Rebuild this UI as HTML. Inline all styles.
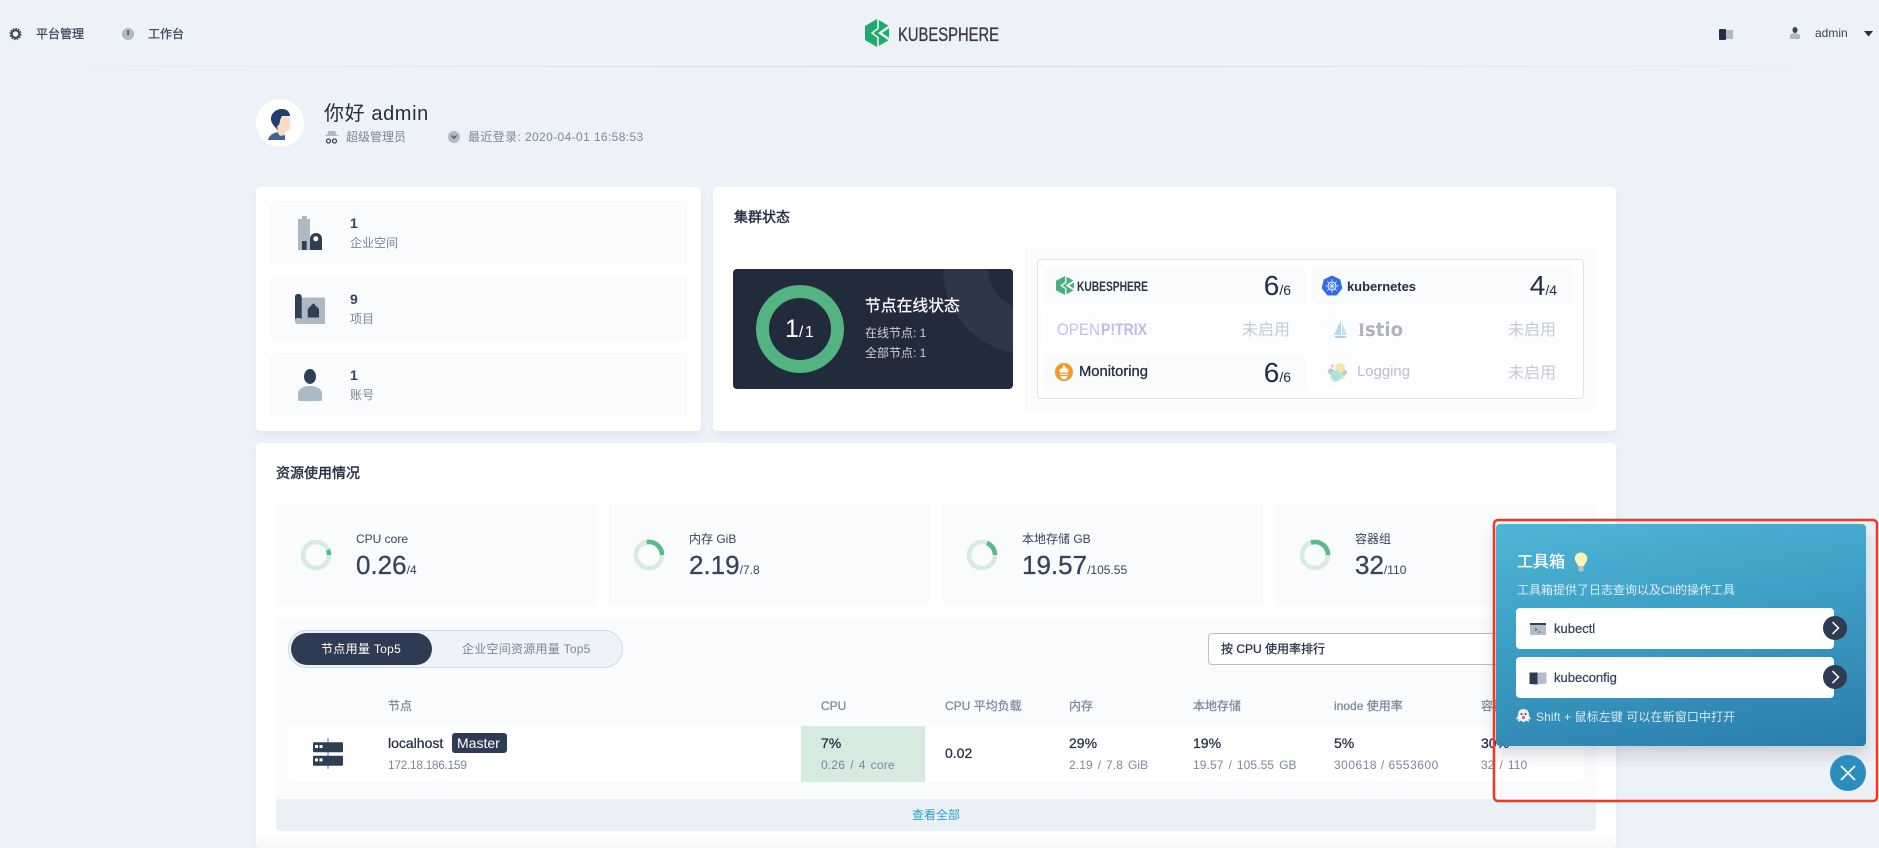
<!DOCTYPE html>
<html lang="zh">
<head>
<meta charset="utf-8">
<title>KubeSphere</title>
<style>
html,body{margin:0;padding:0;width:1879px;height:848px;overflow:hidden;}
body{background:#edf2f9;font-family:"Liberation Sans","Noto Sans CJK SC",sans-serif;color:#242e42;}
#w{position:absolute;left:0;top:0;width:1879px;height:848px;overflow:hidden;}
.b{position:absolute;box-sizing:border-box;}
.t{position:absolute;white-space:nowrap;line-height:20px;font-size:12px;}
.g{color:#79879c;}
.m{color:#36435c;}
.B{font-weight:700;}
.h{-webkit-text-stroke:.25px currentColor;}
.sub{word-spacing:1.5px;letter-spacing:.1px;}
.card{background:#fff;border-radius:4px;box-shadow:0 4px 8px rgba(36,46,66,.06);}
.soft{background:#f9fbfd;border-radius:4px;}
.n{position:absolute;line-height:37px;white-space:nowrap;text-align:right;color:#242e42;font-size:28px;}
.n span{font-size:14px;}
.off{position:absolute;line-height:37px;font-size:16px;color:#c6cad2;white-space:nowrap;text-align:right;}
.val{position:absolute;white-space:nowrap;line-height:30px;font-size:26px;color:#36435c;-webkit-text-stroke:.3px #36435c;}
.val span{font-size:12px;-webkit-text-stroke:0;}
svg{position:absolute;left:0;top:0;}
</style>
</head>
<body>
<div id="w">

<!-- nav -->
<div class="b" style="left:0;top:66px;width:1879px;height:1px;background:linear-gradient(90deg,rgba(209,215,228,0),#d1d7e4 50%,rgba(209,215,228,0));"></div>
<div class="t h" style="left:36px;top:24px;color:#36435c;">平台管理</div>
<div class="t h" style="left:148px;top:24px;color:#36435c;">工作台</div>
<div class="t m" style="left:1815px;top:23px;font-size:12px;">admin</div>

<!-- greeting -->
<div class="b" style="left:256px;top:99px;width:48px;height:48px;border-radius:50%;background:#fff;"></div>
<div class="t" style="left:324px;top:99px;font-size:20px;line-height:30px;color:#242e42;letter-spacing:.6px;">你好 admin</div>
<div class="t g" style="left:346px;top:127px;">超级管理员</div>
<div class="t g" style="left:468px;top:127px;letter-spacing:.38px;">最近登录: 2020-04-01 16:58:53</div>

<!-- left card -->
<div class="b card" style="left:256px;top:187px;width:445px;height:244px;"></div>
<div class="b soft" style="left:270px;top:201px;width:417px;height:64px;"></div>
<div class="b soft" style="left:270px;top:277px;width:417px;height:64px;"></div>
<div class="b soft" style="left:270px;top:353px;width:417px;height:64px;"></div>
<div class="t B" style="left:350px;top:213px;font-size:14px;color:#36435c;">1</div>
<div class="t g" style="left:350px;top:233px;">企业空间</div>
<div class="t B" style="left:350px;top:289px;font-size:14px;color:#36435c;">9</div>
<div class="t g" style="left:350px;top:309px;">项目</div>
<div class="t B" style="left:350px;top:365px;font-size:14px;color:#36435c;">1</div>
<div class="t g" style="left:350px;top:385px;">账号</div>

<!-- cluster card -->
<div class="b card" style="left:713px;top:187px;width:903px;height:244px;"></div>
<div class="t h" style="left:734px;top:207px;font-size:14px;-webkit-text-stroke:.4px #242e42;">集群状态</div>
<div class="b" style="left:733px;top:269px;width:280px;height:120px;background:#212b3c;border-radius:4px;overflow:hidden;">
  <div class="b" style="left:210px;top:-85px;width:170px;height:170px;border-radius:50%;background:#2d3748;"></div>
  <div class="b" style="left:255px;top:-40px;width:80px;height:80px;border-radius:50%;background:#212b3c;"></div>
  <div class="b" style="left:23px;top:16px;width:88px;height:88px;border-radius:50%;border:13px solid #53b481;"></div>
</div>
<div class="t" style="left:785px;top:314px;line-height:30px;font-size:25px;color:#fff;">1<span style="font-size:16px;letter-spacing:1.5px;">/1</span></div>
<div class="t h" style="left:865px;top:297px;font-size:15.8px;color:#fff;">节点在线状态</div>
<div class="t" style="left:865px;top:323px;color:rgba(255,255,255,.78);">在线节点: 1</div>
<div class="t" style="left:865px;top:343px;color:rgba(255,255,255,.78);">全部节点: 1</div>

<div class="b soft" style="left:1025px;top:247px;width:571px;height:164px;"></div>
<div class="b" style="left:1037px;top:259px;width:547px;height:140px;background:#fff;border:1px solid #dde3ec;border-radius:4px;"></div>
<div class="b soft" style="left:1045px;top:267px;width:261px;height:37px;"></div>
<div class="b soft" style="left:1312px;top:267px;width:260px;height:37px;"></div>
<div class="b" style="left:1045px;top:310px;width:261px;height:37px;background:#fcfdfe;border-radius:4px;"></div>
<div class="b" style="left:1312px;top:310px;width:260px;height:37px;background:#fcfdfe;border-radius:4px;"></div>
<div class="b soft" style="left:1045px;top:354px;width:261px;height:37px;"></div>
<div class="b" style="left:1312px;top:354px;width:260px;height:37px;background:#fcfdfe;border-radius:4px;"></div>

<div class="n" style="left:1191px;width:100px;top:267px;">6<span>/6</span></div>
<div class="n" style="left:1457px;width:100px;top:267px;">4<span>/4</span></div>
<div class="n" style="left:1191px;width:100px;top:354px;">6<span>/6</span></div>
<div class="off" style="left:1191px;width:99px;top:312px;">未启用</div>
<div class="off" style="left:1457px;width:99px;top:312px;">未启用</div>
<div class="off" style="left:1457px;width:99px;top:355px;">未启用</div>

<!-- resources -->
<div class="b card" style="left:256px;top:443px;width:1360px;height:405px;"></div>
<div class="t h" style="left:276px;top:463px;font-size:14px;-webkit-text-stroke:.4px #242e42;">资源使用情况</div>
<div class="b soft" style="left:276px;top:503px;width:321px;height:103px;"></div>
<div class="b soft" style="left:609px;top:503px;width:321px;height:103px;"></div>
<div class="b soft" style="left:942px;top:503px;width:321px;height:103px;"></div>
<div class="b soft" style="left:1275px;top:503px;width:321px;height:103px;"></div>

<div class="t m" style="left:356px;top:529px;">CPU core</div>
<div class="val" style="left:356px;top:550px;">0.26<span>/4</span></div>
<div class="t m" style="left:689px;top:529px;">内存 GiB</div>
<div class="val" style="left:689px;top:550px;">2.19<span>/7.8</span></div>
<div class="t m" style="left:1022px;top:529px;">本地存储 GB</div>
<div class="val" style="left:1022px;top:550px;">19.57<span>/105.55</span></div>
<div class="t m" style="left:1355px;top:529px;">容器组</div>
<div class="val" style="left:1355px;top:550px;">32<span>/110</span></div>

<div class="b" style="left:276px;top:618px;width:1320px;height:190px;background:#f9fbfd;"></div>
<div class="b" style="left:276px;top:799px;width:1320px;height:32px;background:#ebf0f7;border-radius:0 0 4px 4px;"></div>
<div class="t" style="left:912px;top:805px;color:#329dce;">查看全部</div>

<div class="b" style="left:288px;top:630px;width:335px;height:38px;border-radius:19px;border:1px solid #d1d7e4;background:#eef3f9;"></div>
<div class="b" style="left:291px;top:633px;width:141px;height:32px;border-radius:16px;background:#2f3b53;"></div>
<div class="t" style="left:321px;top:639px;color:#fff;letter-spacing:.3px;">节点用量 Top5</div>
<div class="t g" style="left:462px;top:639px;letter-spacing:.25px;">企业空间资源用量 Top5</div>

<div class="b" style="left:1208px;top:633px;width:376px;height:32px;background:#fff;border:1px solid #b6c0cd;border-radius:4px;"></div>
<div class="t h" style="left:1221px;top:639px;">按 CPU 使用率排行</div>

<div class="t g h" style="left:388px;top:696px;">节点</div>
<div class="t g h" style="left:821px;top:696px;">CPU</div>
<div class="t g h" style="left:945px;top:696px;">CPU 平均负载</div>
<div class="t g h" style="left:1069px;top:696px;">内存</div>
<div class="t g h" style="left:1193px;top:696px;">本地存储</div>
<div class="t g h" style="left:1334px;top:696px;">inode 使用率</div>
<div class="t g h" style="left:1481px;top:696px;">容器组</div>

<div class="b" style="left:288px;top:726px;width:1296px;height:56px;background:#fff;border-radius:4px;"></div>
<div class="b" style="left:801px;top:726px;width:124px;height:56px;background:#d6eadf;"></div>
<div class="t h" style="left:388px;top:733px;font-size:14px;">localhost</div>
<div class="b" style="left:452px;top:733px;width:55px;height:20px;background:#2f3b53;border-radius:3px;"></div>
<div class="t" style="left:457px;top:733px;font-size:14px;color:#fff;">Master</div>
<div class="t g" style="left:388px;top:755px;letter-spacing:-.35px;">172.18.186.159</div>
<div class="t h" style="left:821px;top:733px;font-size:14px;">7%</div>
<div class="t g" style="left:821px;top:755px;word-spacing:1.5px;letter-spacing:.2px;">0.26 / 4 core</div>
<div class="t h" style="left:945px;top:743px;font-size:14px;">0.02</div>
<div class="t h" style="left:1069px;top:733px;font-size:14px;">29%</div>
<div class="t g sub" style="left:1069px;top:755px;">2.19 / 7.8 GiB</div>
<div class="t h" style="left:1193px;top:733px;font-size:14px;">19%</div>
<div class="t g sub" style="left:1193px;top:755px;">19.57 / 105.55 GB</div>
<div class="t h" style="left:1334px;top:733px;font-size:14px;">5%</div>
<div class="t g" style="left:1334px;top:755px;letter-spacing:.5px;">300618 / 6553600</div>
<div class="t h" style="left:1481px;top:733px;font-size:14px;">30%</div>
<div class="t g sub" style="left:1481px;top:755px;">32 / 110</div>

<div class="b" style="left:0;top:832px;width:1879px;height:16px;background:linear-gradient(180deg,rgba(240,240,240,0),rgba(240,240,240,.45));"></div>

<!-- icons and logos -->
<svg width="1879" height="848" viewBox="0 0 1879 848" xmlns="http://www.w3.org/2000/svg">
  <!-- nav icons -->
  <circle cx="15.5" cy="34" r="3.8" fill="none" stroke="#36435c" stroke-width="2"/>
  <circle cx="15.5" cy="34" r="5.4" fill="none" stroke="#36435c" stroke-width="1.4" stroke-dasharray="1.6 1.2"/>
  <circle cx="128" cy="34" r="6" fill="#aeb9c6"/>
  <rect x="127.4" y="30" width="1.3" height="5" fill="#36435c"/>
  <!-- logo -->
  <g transform="translate(865 19)">
    <path fill="#1fa96c" d="M12 0L24 7v14l-12 7L0 21V7z"/>
    <path d="M13 -1v10.5L7 14l6 4.5V29" fill="none" stroke="#edf2f9" stroke-width="1.6"/>
    <path d="M25 7l-10 7 10 7" fill="none" stroke="#edf2f9" stroke-width="2.4"/>
  </g>
  <text x="898" y="41" font-family="'Liberation Sans',sans-serif" font-size="19.5" fill="#3b3a45" stroke="#3b3a45" stroke-width=".35" textLength="101" lengthAdjust="spacingAndGlyphs">KUBESPHERE</text>
  <!-- top right -->
  <rect x="1719" y="29" width="7" height="11" rx="1" fill="#242e42"/>
  <rect x="1726" y="30" width="7" height="9" fill="#aeb9c6"/>
  <ellipse cx="1795" cy="30" rx="2.5" ry="3" fill="#36435c"/>
  <path d="M1790 39v-3c0-2 2-2.800 5-2.800s5 .8 5 2.800v3z" fill="#aeb9c6"/>
  <path d="M1864 31h9l-4.500 5.500z" fill="#242e42"/>
  <!-- avatar -->
  <path d="M268 140c1-5 6-8 12-8 3 0 5 1 5 3v5z" fill="#3c6596"/>
  <path d="M276 116l14 1v13l-5 2v3l-5 1-4-6z" fill="#fbdcc6"/>
  <path d="M271 119c0-6 5-10 11-10 5 0 8 3 8 7-3 0-6 0-8 0-2 3-2 6-3 9l-2 1 1 4-3-3c-2-2-4-5-4-8z" fill="#1f3f6e"/>
  <!-- role + clock -->
  <path d="M328 131h7l1.500 4h2v1h-13v-1h2z" fill="#aeb9c6"/>
  <circle cx="328.500" cy="141" r="2" fill="none" stroke="#36435c" stroke-width="1.300"/>
  <circle cx="334.500" cy="141" r="2" fill="none" stroke="#36435c" stroke-width="1.300"/>
  <circle cx="454" cy="137" r="6" fill="#aeb9c6"/>
  <path d="M451.500 135.500l2.500 2.500 2.500-2.500" fill="none" stroke="#36435c" stroke-width="1.200"/>
  <!-- left card icons -->
  <path d="M298 219h4v-3h5v3h3v31h-12z" fill="#aeb9c6"/>
  <rect x="302" y="241" width="4.600" height="9" fill="#2e3f52"/>
  <path d="M310 250v-11c0-3.500 2.500-6 6-6s6 2.500 6 6v11z" fill="#2e3f52"/>
  <circle cx="315.800" cy="238.800" r="2.500" fill="#fff"/>
  <path d="M298 297.500h27V324h-27c-2 0-3-1-3-3v-20z" fill="#aeb9c6"/>
  <path d="M295 297c0-2 1.300-3 3.300-3s3.400 1 3.400 3v22c-2-1.500-4.700-1.500-6.700 0z" fill="#2e3f52"/>
  <path d="M307.700 309l5.700-5.800 5.600 5.800v8.500h-11.300z" fill="#2e3f52"/>
  <ellipse cx="310" cy="376.500" rx="6" ry="7.500" fill="#2e3f52"/>
  <path d="M298 400.700v-7c0-5 6-7.700 12-7.700s12 2.700 12 7.700v7c-8 .6-16 .6-24 0z" fill="#aeb9c6"/>

  <!-- small logos -->
  <g transform="translate(1056 276) scale(.75 .68)">
    <path fill="#4fae7e" d="M12 0L24 7v14l-12 7L0 21V7z"/>
    <path d="M13 -1v10.500L7 14l6 4.500V29" fill="none" stroke="#f9fbfd" stroke-width="1.800"/>
    <path d="M25 7l-10 7 10 7" fill="none" stroke="#f9fbfd" stroke-width="2.600"/>
  </g>
  <text x="1077" y="291" font-family="'Liberation Sans',sans-serif" font-weight="700" font-size="14" fill="#2b3548" textLength="71" lengthAdjust="spacingAndGlyphs">KUBESPHERE</text>

  <g transform="translate(1332 286)">
    <path d="M0-10L7.800-6.200 9.800 2.200 4.300 9 -4.300 9 -9.800 2.200 -7.800-6.200z" fill="#326de6" stroke="#326de6" stroke-width="1" stroke-linejoin="round"/>
    <circle r="4" fill="none" stroke="#dfe9fb" stroke-width="1.100"/>
    <path d="M0-7V7M-6.500 0H6.500M-4.600-4.600L4.600 4.600M4.600-4.600L-4.600 4.600" stroke="#dfe9fb" stroke-width=".8"/>
  </g>
  <text x="1347" y="291" font-family="'Liberation Sans',sans-serif" font-weight="700" font-size="13" fill="#242e42" textLength="69" lengthAdjust="spacing">kubernetes</text>

  <text x="1057" y="335" font-family="'Liberation Sans',sans-serif" font-size="16.5" fill="#c9c0ea" textLength="43" lengthAdjust="spacingAndGlyphs">OPEN</text>
  <text x="1101" y="335" font-family="'Liberation Sans',sans-serif" font-weight="700" font-size="16.5" fill="#c3b8e6" textLength="46" lengthAdjust="spacingAndGlyphs">P!TRIX</text>

  <path d="M1341 320v15h-7z" fill="#b4d9ec"/>
  <path d="M1342 323l5 12h-5z" fill="#c6e2f1"/>
  <path d="M1334 336h13l-2 2h-9z" fill="#a8d3e8"/>
  <text x="1358" y="336" font-family="'DejaVu Sans',sans-serif" font-weight="700" font-size="18.5" fill="#b0b2bb" textLength="45" lengthAdjust="spacingAndGlyphs"><tspan font-family="'Liberation Serif',serif">I</tspan>stio</text>

  <circle cx="1064" cy="372" r="9" fill="#f49a24"/>
  <path d="M1064 364.500c.5 2 2.800 3 2.800 5.500 .6-.4.8-1 .8-1.800 1.200 1.500 1 3.200.4 4.300h-8c-.8-1.500-.6-3 .6-4.300 0 .8.3 1.300.8 1.600 0-2 2.400-3 2.100-5.300z" fill="#fff"/>
  <rect x="1059.800" y="373.700" width="8.400" height="1.300" fill="#fff"/>
  <path d="M1060.500 376h7l-1 2.500c-.8.800-4.200.8-5 0z" fill="#fff"/>
  <text x="1079" y="376" font-family="'Liberation Sans',sans-serif" font-size="15" fill="#242e42" stroke="#242e42" stroke-width=".3" textLength="69" lengthAdjust="spacingAndGlyphs">Monitoring</text>

  <g opacity=".75">
    <circle cx="1332.500" cy="366" r="1.800" fill="#f5b5c8"/>
    <circle cx="1331" cy="371.500" r="3" fill="#a9afd0"/>
    <circle cx="1344" cy="372.500" r="3" fill="#a8bcb4"/>
    <circle cx="1342.700" cy="377" r="2" fill="#d6e8a8"/>
    <circle cx="1340" cy="368" r="5" fill="#fbd98d"/>
    <circle cx="1336" cy="376" r="5.500" fill="#93dccf"/>
  </g>
  <text x="1357" y="376" font-family="'Liberation Sans',sans-serif" font-size="14.5" fill="#bcbfc6" textLength="53" lengthAdjust="spacingAndGlyphs">Logging</text>

  <!-- rings -->
  <g fill="none" stroke-width="4.600">
    <circle cx="316" cy="555" r="13" stroke="#d6ecdf"/>
    <path d="M327.970 549.900A13 13 0 0 1 329 555" stroke="#55bc8a"/>
    <circle cx="649" cy="555" r="13" stroke="#d6ecdf"/>
    <path d="M646.700 542.200A13 13 0 0 1 662 555" stroke="#55bc8a"/>
    <circle cx="982" cy="555" r="13" stroke="#d6ecdf"/>
    <path d="M987 543A13 13 0 0 1 995 555" stroke="#55bc8a"/>
    <circle cx="1315" cy="555" r="13" stroke="#d6ecdf"/>
    <path d="M1311 542.600A13 13 0 0 1 1328 555" stroke="#55bc8a"/>
  </g>

  <!-- server icon -->
  <rect x="327" y="738" width="2" height="31" fill="#aeb9c6"/>
  <rect x="313" y="742.300" width="30" height="10" rx="1" fill="#2e3f52"/>
  <rect x="313" y="755.700" width="30" height="10" rx="1" fill="#2e3f52"/>
  <rect x="315" y="745" width="3" height="3" fill="#fff"/>
  <rect x="319.500" y="745" width="3" height="3" fill="#fff"/>
  <rect x="315" y="758.400" width="3" height="3" fill="#fff"/>
  <rect x="319.500" y="758.400" width="3" height="3" fill="#fff"/>
</svg>

<!-- toolbox -->
<div class="b" style="left:1496px;top:524px;width:370px;height:222px;border-radius:4px;background:linear-gradient(170deg,#4fb5d6 0%,#3a9bc2 50%,#2a7dab 100%);box-shadow:0 8px 16px rgba(36,46,66,.2);"></div>
<div class="t h" style="left:1517px;top:553px;font-size:16px;color:#fff;">工具箱</div>
<div class="t" style="left:1517px;top:580px;color:rgba(255,255,255,.82);">工具箱提供了日志查询以及Cli的操作工具</div>
<div class="b" style="left:1516px;top:608px;width:318px;height:41px;background:#fff;border-radius:4px;"></div>
<div class="b" style="left:1516px;top:657px;width:318px;height:41px;background:#fff;border-radius:4px;"></div>
<div class="t m h" style="left:1554px;top:619px;font-size:13px;">kubectl</div>
<div class="t m h" style="left:1554px;top:668px;font-size:13px;">kubeconfig</div>
<div class="t" style="left:1536px;top:707px;color:rgba(255,255,255,.82);letter-spacing:.1px;">Shift + 鼠标左键 可以在新窗口中打开</div>
<div class="b" style="left:1830px;top:755px;width:36px;height:36px;border-radius:50%;background:#2b8dbd;"></div>

<svg width="1879" height="848" viewBox="0 0 1879 848" xmlns="http://www.w3.org/2000/svg">
  <!-- bulb -->
  <path d="M1581 552.500c-3.700 0-6.200 2.800-6.200 6 0 3.200 2.500 4.800 3.300 8h5.800c.8-3.200 3.300-4.800 3.300-8 0-3.200-2.500-6-6.200-6z" fill="#fdf3b8"/>
  <rect x="1578.500" y="567" width="5" height="4.500" rx="1" fill="#b9c4c9"/>
  <!-- kubectl icon -->
  <rect x="1530" y="623" width="16" height="12" fill="#b2bdc9"/>
  <rect x="1530" y="623" width="16" height="2" fill="#36435c"/>
  <path d="M1535 628l1.800 1.500-1.800 1.500M1538 632h2.500" fill="none" stroke="#36435c" stroke-width=".7"/>
  <!-- book icon -->
  <path d="M1529.500 672.500h8v12l-8-.5z" fill="#2e3b52"/>
  <path d="M1537.500 672.500h9v11l-9 1z" fill="#b2bdc9"/>
  <!-- chevrons -->
  <circle cx="1835" cy="628" r="12" fill="#2e3b52"/>
  <path d="M1832.500 622l6 6-6 6" fill="none" stroke="#fff" stroke-width="1.500"/>
  <circle cx="1835" cy="677" r="12" fill="#2e3b52"/>
  <path d="M1832.500 671l6 6-6 6" fill="none" stroke="#fff" stroke-width="1.500"/>
  <!-- ghost -->
  <path d="M1523.500 709c-3.600 0-5.500 2.700-5.500 6 0 1.500-1.500 2.800-2 4.500l2.500-.5-.5 3 3-1.500 2.500 2 2.500-2 3 1.500-.5-3 2.500.5c-.5-1.700-2-3-2-4.500 0-3.300-1.900-6-5.500-6z" fill="#eef2f5"/>
  <circle cx="1521.500" cy="714" r="1" fill="#3a3f4a"/>
  <circle cx="1525.500" cy="714" r="1" fill="#3a3f4a"/>
  <ellipse cx="1523.500" cy="717.500" rx="1.400" ry="1.800" fill="#d8567e"/>
  <!-- close -->
  <path d="M1841 766l14 14M1855 766l-14 14" stroke="#fff" stroke-width="1.700" fill="none"/>
  <!-- annotation -->
  <rect x="1494" y="520" width="383" height="281" rx="4" fill="none" stroke="#f03a1f" stroke-width="2.500"/>
</svg>
</div>
</body>
</html>
